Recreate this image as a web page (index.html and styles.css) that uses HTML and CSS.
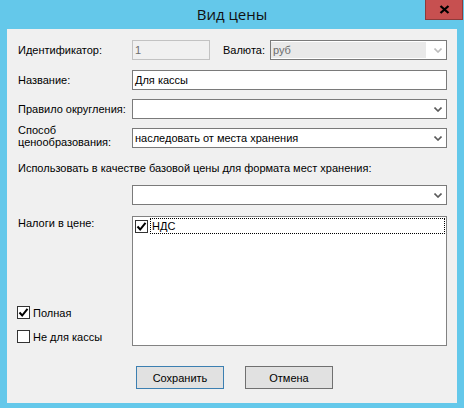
FILE: index.html
```html
<!DOCTYPE html>
<html lang="ru">
<head>
    <meta charset="UTF-8">
    <title>Вид цены</title>
    <link rel="stylesheet" href="styles.css">
</head>
<body>
    <div class="window">
        <div class="titlebar">
            <span class="title">Вид цены</span>
            <button class="close">
                <svg width="11" height="9" viewBox="0 0 11 9"><path d="M1.5 1 L9.5 8 M9.5 1 L1.5 8" stroke="#000" stroke-width="2.3"/></svg>
            </button>
        </div>

        <div class="client">
            <div class="row">
                <span class="label">Идентификатор:</span>
                <div class="field field-id disabled">1</div>
                <span class="label label-currency">Валюта:</span>
                <div class="combo disabled">
                    <span class="combo-text">руб</span>
                    <svg class="arrow" width="8" height="5" viewBox="0 0 8 5"><path d="M0.5 0.5 L4 4 L7.5 0.5" fill="none" stroke="#bdbdbd" stroke-width="1.6"/></svg>
                </div>
            </div>

            <div class="row row-gap10">
                <span class="label">Название:</span>
                <div class="field">Для кассы</div>
            </div>

            <div class="row row-gap9">
                <span class="label">Правило округления:</span>
                <div class="combo">
                    <span class="combo-text"></span>
                    <svg class="arrow" width="8" height="5" viewBox="0 0 8 5"><path d="M0.5 0.5 L4 4 L7.5 0.5" fill="none" stroke="#5a5a5a" stroke-width="1.6"/></svg>
                </div>
            </div>

            <div class="row row-gap9">
                <span class="label label-two">Способ<br>ценообразования:</span>
                <div class="combo">
                    <span class="combo-text">наследовать от места хранения</span>
                    <svg class="arrow" width="8" height="5" viewBox="0 0 8 5"><path d="M0.5 0.5 L4 4 L7.5 0.5" fill="none" stroke="#5a5a5a" stroke-width="1.6"/></svg>
                </div>
            </div>

            <div class="wide-label">Использовать в качестве базовой цены для формата мест хранения:</div>

            <div class="row row-indent">
                <div class="combo">
                    <span class="combo-text"></span>
                    <svg class="arrow" width="8" height="5" viewBox="0 0 8 5"><path d="M0.5 0.5 L4 4 L7.5 0.5" fill="none" stroke="#5a5a5a" stroke-width="1.6"/></svg>
                </div>
            </div>

            <div class="taxes">
                <div class="taxes-side">
                    <span class="label">Налоги в цене:</span>
                    <div class="flags">
                        <div class="flag">
                            <span class="check">
                                <svg width="11" height="11" viewBox="0 0 11 11"><path d="M1.5 5.5 L4.2 8.5 L9.5 1.8" fill="none" stroke="#000" stroke-width="2"/></svg>
                            </span>
                            <span>Полная</span>
                        </div>
                        <div class="flag">
                            <span class="check"></span>
                            <span>Не для кассы</span>
                        </div>
                    </div>
                </div>
                <div class="listbox">
                    <div class="list-item">
                        <span class="check">
                            <svg width="11" height="11" viewBox="0 0 11 11"><path d="M1.5 5.5 L4.2 8.5 L9.5 1.8" fill="none" stroke="#000" stroke-width="2"/></svg>
                        </span>
                        <span class="item-text">НДС</span>
                    </div>
                </div>
            </div>

            <div class="buttons">
                <button class="btn btn-default">Сохранить</button>
                <button class="btn">Отмена</button>
            </div>
        </div>
    </div>
</body>
</html>
```

FILE: styles.css
```css
body {
    margin: 0;
    font-family: "Liberation Sans", Arial, sans-serif;
    font-size: 11px;
    color: #000;
}

.window {
    width: 464px;
    height: 408px;
    box-sizing: border-box;
    padding: 0 7px 5px;
    background-color: #64c8ea;
    display: flex;
    flex-direction: column;
}

.titlebar {
    height: 29px;
    margin: 0 -7px;
    padding-left: 39px;
    display: flex;
}
.title {
    flex: 1;
    text-align: center;
    line-height: 29px;
    font-family: "Open Sans", "Noto Sans", sans-serif;
    font-size: 15px;
    color: #111;
}
.close {
    width: 38px;
    height: 20px;
    margin-right: 1px;
    padding: 0;
    border: 1px solid #8c3b3b;
    border-top: none;
    background-color: #c75050;
    display: flex;
    justify-content: center;
    align-items: center;
}

.client {
    flex: 1;
    background-color: #f0f0f0;
    padding: 11px 10px 0 11px;
}

.row {
    display: flex;
    align-items: center;
    height: 20px;
}
.row-gap10 { margin-top: 10px; }
.row-gap9 { margin-top: 9px; }
.row-indent {
    margin-top: 10px;
    padding-left: 114px;
}

.label {
    width: 114px;
    flex-shrink: 0;
    white-space: nowrap;
}
.label-two {
    line-height: 12px;
    align-self: flex-start;
    margin-top: -4px;
}
.label-currency {
    width: 47px;
    margin-left: 13px;
}

.field {
    flex: 1;
    height: 20px;
    box-sizing: border-box;
    border: 1px solid #7a7a7a;
    background-color: #fff;
    padding-left: 2px;
    line-height: 18px;
}
.field-id {
    flex: none;
    width: 78px;
}
.disabled {
    border-color: #c2c2c2;
    background-color: #f0f0f0;
    color: #6d6d6d;
}

.combo {
    flex: 1;
    height: 20px;
    box-sizing: border-box;
    border: 1px solid #7a7a7a;
    background-color: #fff;
    display: flex;
    align-items: center;
}
.combo-text {
    flex: 1;
    padding-left: 2px;
    line-height: 18px;
}
.combo.disabled .combo-text {
    align-self: stretch;
    margin: 1px 0;
    line-height: 16px;
    background-color: #e9e9e9;
}
.arrow {
    margin: 1px 4px 0 8px;
}

.wide-label {
    margin-top: 14px;
    line-height: 13px;
}

.taxes {
    display: flex;
    margin-top: 11px;
    height: 130px;
}
.taxes-side {
    width: 114px;
    display: flex;
    flex-direction: column;
    justify-content: space-between;
    padding-top: 1px;
}
.flags {
    padding-bottom: 3px;
}
.flag {
    display: flex;
    align-items: center;
    gap: 3px;
    margin-left: -1px;
}
.flag + .flag {
    margin-top: 11px;
}

.check {
    width: 13px;
    height: 13px;
    box-sizing: border-box;
    border: 1px solid #333;
    background-color: #fff;
    display: flex;
    justify-content: center;
    align-items: center;
    flex-shrink: 0;
}

.listbox {
    flex: 1;
    box-sizing: border-box;
    border: 1px solid #828282;
    background-color: #fff;
}
.list-item {
    display: flex;
    align-items: center;
    height: 16px;
    margin-top: 1px;
    padding-left: 2px;
}
.item-text {
    flex: 1;
    margin: 0 1px 0 2px;
    height: 16px;
    box-sizing: border-box;
    border: 1px dotted #000;
    line-height: 14px;
    padding-left: 1px;
}

.buttons {
    display: flex;
    gap: 21px;
    margin-top: 20px;
    padding-left: 118px;
}
.btn {
    width: 88px;
    height: 23px;
    border: 1px solid #707070;
    background-color: #e1e1e1;
    font-family: "Liberation Sans", Arial, sans-serif;
    font-size: 11px;
    color: #000;
    padding: 0;
}
.btn-default {
    border-color: #3c7fb1;
}
```
